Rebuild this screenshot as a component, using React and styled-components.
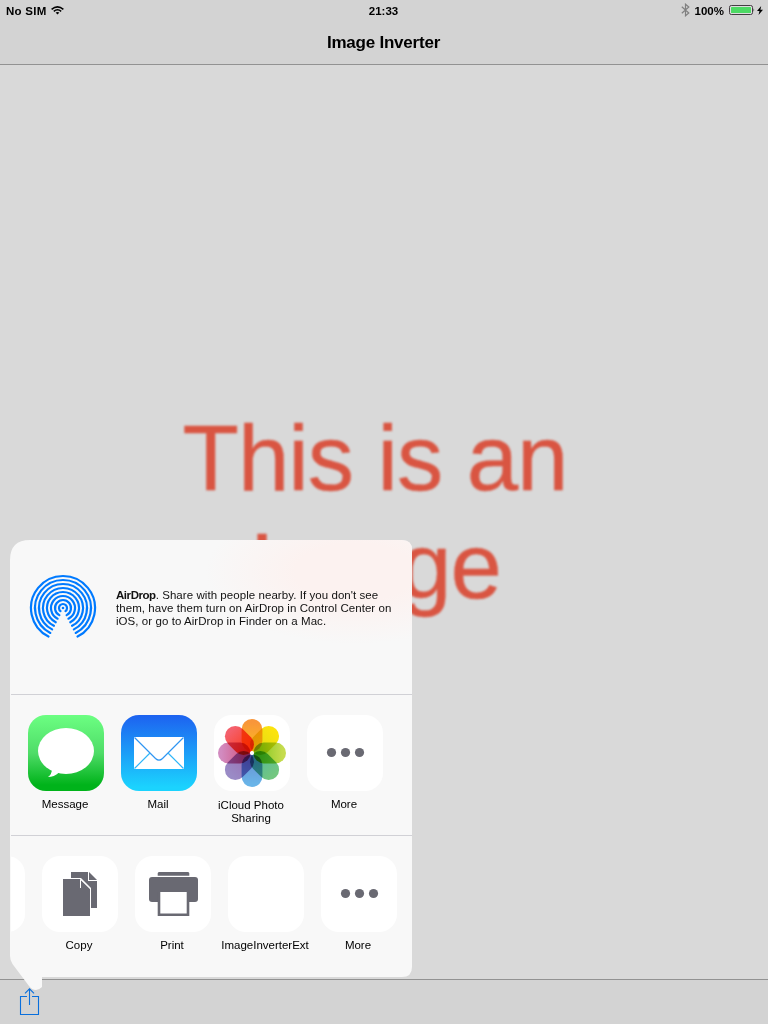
import React from 'react';
import styled, { createGlobalStyle } from 'styled-components';

const GlobalStyle = createGlobalStyle`
  * { box-sizing: border-box; }
  body {
    margin: 0;
    background: #d9d9d9;
    font-family: "Liberation Sans", Arial, sans-serif;
    color: #000;
  }
`;

const Screen = styled.div`
  position: relative;
  width: 768px;
  height: 1024px;
  display: flex;
  flex-direction: column;
  overflow: hidden;
  background: #d9d9d9;
`;

const Header = styled.header`
  height: 65px;
  background: #d3d3d3;
  border-bottom: 1px solid #929292;
`;

const StatusBar = styled.div`
  display: grid;
  grid-template-columns: 1fr auto 1fr;
  align-items: center;
  height: 20px;
  padding: 2px 5px 0 6px;
  font-size: 11.5px;
  font-weight: 700;
  line-height: 18px;
`;

const StatusGroup = styled.div`
  display: flex;
  align-items: center;
  justify-content: ${(p) => (p.$end ? 'flex-end' : 'flex-start')};
  gap: ${(p) => p.$gap}px;
  letter-spacing: ${(p) => p.$spacing || 0}px;

  svg { display: block; flex: none; margin-bottom: 2px; }
`;

const Clock = styled.span`
  margin-right: 2px;
`;

const Title = styled.h1`
  margin: 0;
  padding: 1px 1px 0 0;
  text-align: center;
  font-size: 17px;
  line-height: 43px;
  letter-spacing: -0.22px;
`;

const Canvas = styled.main`
  flex: 1;
  padding: 339px 18px 0 0;
  overflow: hidden;
`;

const Picture = styled.div`
  font-size: 92.5px;
  line-height: 108px;
  letter-spacing: -1.1px;
  text-align: center;
  color: #d95542;
  -webkit-text-stroke: 0.4px #d95542;
  filter: blur(0.8px);
`;

const Toolbar = styled.footer`
  height: 45px;
  padding: 8px 19px;
  background: #d3d3d3;
  border-top: 1px solid #929292;

  svg { display: block; position: relative; z-index: 2; }
`;

const Popover = styled.section`
  position: absolute;
  z-index: 1;
  left: 10px;
  top: 540px;
  width: 402px;
  height: 451px;
  padding-left: 1px;
  background:
    radial-gradient(ellipse 150px 72px at 345px 32px, #fcf2f0 0%, #fcf2f0 40%, rgba(252, 242, 240, 0) 100%),
    #f8f8f8;
  clip-path: path("M0 20 Q0 0 20 0 H392 Q402 0 402 10 V427 Q402 437 392 437 H32 V447 Q29 450 26 450 Q22 450 19 446 L2.5 424 Q0 420 0 416 Z");
`;

const AirDropSection = styled.div`
  display: flex;
  align-items: flex-start;
  height: 155px;
  padding: 34px 0 0 18px;
  border-bottom: 1px solid #d1d1d6;

  svg { display: block; flex: none; }
`;

const AirDropText = styled.p`
  margin: 15px 0 0 19px;
  font-size: 11.5px;
  line-height: 13px;
  letter-spacing: 0.06px;
  white-space: nowrap;
  color: #111;

  b { letter-spacing: -0.45px; }
`;

const ActionRow = styled.div`
  display: flex;
  gap: 17px;
  height: 141px;
  padding-top: 20px;
  padding-left: ${(p) => p.$inset}px;
  border-bottom: ${(p) => (p.$last ? 'none' : '1px solid #d1d1d6')};
  overflow: hidden;
`;

const Action = styled.div`
  flex: none;
  width: 76px;
  margin-left: ${(p) => p.$shift || 0}px;
  display: flex;
  flex-direction: column;
  align-items: center;
`;

const Tile = styled.div`
  width: 76px;
  height: 76px;
  flex: none;
  border-radius: 18px;
  background: ${(p) => p.$fill || '#fff'};
  overflow: hidden;

  svg { display: block; }
`;

const Label = styled.div`
  margin-top: ${(p) => p.$top || 7}px;
  padding-right: 2px;
  font-size: 11.5px;
  line-height: 13px;
  text-align: center;
  white-space: pre;
`;

const WifiIcon = () => (
  <svg width="13" height="9" viewBox="0 0 13 9" fill="none" stroke="#000" strokeWidth="1.5">
    <path d="M.6 3.3Q6.5-1.6 12.4 3.3" />
    <path d="M2.8 5.4Q6.5 2.2 10.2 5.4" />
    <path d="M4.6 6.6Q6.5 5.2 8.4 6.6L6.5 8.6Z" fill="#000" stroke="none" />
  </svg>
);

const BluetoothIcon = () => (
  <svg width="9" height="14" viewBox="0 0 9 14" fill="none" stroke="#808080" strokeWidth="1.2">
    <path d="M.8 3.7 7.8 10 4.5 12.8V1.2L7.8 4 .8 10.3" />
  </svg>
);

const BatteryIcon = () => (
  <svg width="26" height="10" viewBox="0 0 26 10">
    <rect x=".5" y=".5" width="23" height="9" rx="1.8" fill="#dedede" stroke="#443c42" />
    <rect x="2" y="2" width="20" height="6" rx=".6" fill="#4cd964" />
    <path d="M24.6 3.2q1.2 1.8 0 3.6z" fill="#111" />
  </svg>
);

const BoltIcon = () => (
  <svg width="6" height="9" viewBox="0 0 6 9">
    <path d="M4.2 0 0 5h2.5L1.5 9 6 3.7H3.4z" />
  </svg>
);

const ShareIcon = () => (
  <svg width="21" height="28" viewBox="0 0 21 28" fill="none" stroke="#0a6fdc" strokeWidth="1.1">
    <path d="M8 8.5H1.5V26.5H19.5V8.5H13" />
    <path d="M10.5 17V1M6 5.3 10.5.8 15 5.3" />
  </svg>
);

const RINGS = [4, 8, 12, 16, 20, 24, 28, 32];

const ringPath = (r) => {
  const half = ((r < 8 ? 38 : 27) * Math.PI) / 180;
  const dx = r * Math.sin(half);
  const y = 34 + r * Math.cos(half);
  return `M${34 - dx} ${y}A${r} ${r} 0 1 1 ${34 + dx} ${y}`;
};

const AirDropIcon = () => (
  <svg width="68" height="68" viewBox="0 0 68 68" fill="none" stroke="#007aff" strokeWidth="2.2" strokeLinecap="round">
    {RINGS.map((r) => <path key={r} d={ringPath(r)} />)}
    <circle cx="34" cy="34" r="1.3" fill="#007aff" stroke="none" />
  </svg>
);

const MessageIcon = () => (
  <svg width="76" height="76" viewBox="0 0 76 76" fill="#fff">
    <ellipse cx="38" cy="36" rx="28" ry="23" />
    <path d="M24 54Q24 59 20 62Q26 62 31 57.5L33 54Z" />
  </svg>
);

const MailIcon = () => (
  <svg width="76" height="76" viewBox="0 0 76 76" fill="none" stroke="#2f95f2" strokeWidth="1.2">
    <rect x="13" y="22" width="50" height="32" fill="#fff" stroke="none" />
    <path d="M13.5 22.5 34.5 43.5Q38 46.8 41.5 43.5L62.5 22.5" />
    <path d="M13.5 53.5 29 38M62.5 53.5 47 38" stroke="#30b6f8" />
  </svg>
);

const PETALS = [
  ['#f8963a', '#fdba20'],
  ['#fbe30e', '#e0dc15'],
  ['#c6dc4e', '#7fc51c'],
  ['#72c780', '#55b9a0'],
  ['#69b4e8', '#6a8fd2'],
  ['#9a8bc6', '#9a70b4'],
  ['#d28bc0', '#d0507a'],
  ['#f4606c', '#fb3a1c'],
];

const PhotosIcon = () => (
  <svg width="76" height="76" viewBox="0 0 76 76">
    <defs>
      {PETALS.map(([outer, inner], i) => (
        <linearGradient key={i} id={`petal${i}`} x1="0" y1="0" x2="0" y2="1">
          <stop offset="0.1" stopColor={outer} />
          <stop offset="0.9" stopColor={inner} />
        </linearGradient>
      ))}
    </defs>
    <g style={{ isolation: 'isolate' }}>
      {PETALS.map((_, i) => (
        <rect
          key={i}
          x="-10.4"
          y="-34"
          width="20.8"
          height="32.5"
          rx="10.4"
          fill={`url(#petal${i})`}
          transform={`translate(38 38) rotate(${i * 45})`}
          style={{ mixBlendMode: 'multiply' }}
        />
      ))}
    </g>
    <circle cx="38" cy="38" r="2" fill="#fff" />
  </svg>
);

const MoreIcon = () => (
  <svg width="76" height="76" viewBox="0 0 76 76" fill="#696972">
    <circle cx="24.5" cy="37.5" r="4.6" />
    <circle cx="38.5" cy="37.5" r="4.6" />
    <circle cx="52.5" cy="37.5" r="4.6" />
  </svg>
);

const CopyIcon = () => (
  <svg width="76" height="76" viewBox="0 0 76 76" fill="#696972">
    <path d="M29 16H46V25H55V52H29Z" />
    <path d="M47 16 55 24H47Z" />
    <path d="M20 22H39L49 32V61H20Z" fill="#fff" />
    <path d="M21 23H38.2L48 32.8V60H21Z" />
    <path d="M38.5 32V23.3L48 32.5" fill="none" stroke="#fff" strokeWidth="1" />
  </svg>
);

const PrintIcon = () => (
  <svg width="76" height="76" viewBox="0 0 76 76" fill="#696972">
    <path d="M22.7 19.8V17.5Q22.7 16 24 16H53Q54.3 16 54.3 17.5V19.8Z" />
    <rect x="14" y="21" width="49" height="25" rx="3" />
    <rect x="22.7" y="36" width="31.6" height="24" />
    <rect x="25.3" y="36" width="26.4" height="21.5" fill="#fff" />
  </svg>
);

export default function App() {
  return (
    <Screen>
      <GlobalStyle />
      <Header>
        <StatusBar>
          <StatusGroup $gap={5} $spacing={0.25}>
            <span>No SIM</span>
            <WifiIcon />
          </StatusGroup>
          <Clock>21:33</Clock>
          <StatusGroup $end $gap={5}>
            <BluetoothIcon />
            <span>100%</span>
            <StatusGroup $gap={2}>
              <BatteryIcon />
              <BoltIcon />
            </StatusGroup>
          </StatusGroup>
        </StatusBar>
        <Title>Image Inverter</Title>
      </Header>
      <Canvas>
        <Picture>This is an<br />Image</Picture>
      </Canvas>
      <Toolbar><ShareIcon /></Toolbar>
      <Popover>
        <AirDropSection>
          <AirDropIcon />
          <AirDropText>
            <b>AirDrop</b>. Share with people nearby. If you don't see<br />
            them, have them turn on AirDrop in Control Center on<br />
            iOS, or go to AirDrop in Finder on a Mac.
          </AirDropText>
        </AirDropSection>
        <ActionRow $inset={17}>
          <Action>
            <Tile $fill="linear-gradient(#6cff82, #4fdc68 50%, #00b31a 92%)"><MessageIcon /></Tile>
            <Label>Message</Label>
          </Action>
          <Action>
            <Tile $fill="linear-gradient(#1d62f0, #1bd3fe 95%)"><MailIcon /></Tile>
            <Label>Mail</Label>
          </Action>
          <Action>
            <Tile><PhotosIcon /></Tile>
            <Label $top={8}>{'iCloud Photo\nSharing'}</Label>
          </Action>
          <Action>
            <Tile><MoreIcon /></Tile>
            <Label>More</Label>
          </Action>
        </ActionRow>
        <ActionRow $inset={0} $last>
          <Action $shift={-62}><Tile /></Action>
          <Action>
            <Tile><CopyIcon /></Tile>
            <Label>Copy</Label>
          </Action>
          <Action>
            <Tile><PrintIcon /></Tile>
            <Label>Print</Label>
          </Action>
          <Action>
            <Tile />
            <Label>ImageInverterExt</Label>
          </Action>
          <Action>
            <Tile><MoreIcon /></Tile>
            <Label>More</Label>
          </Action>
        </ActionRow>
      </Popover>
    </Screen>
  );
}
